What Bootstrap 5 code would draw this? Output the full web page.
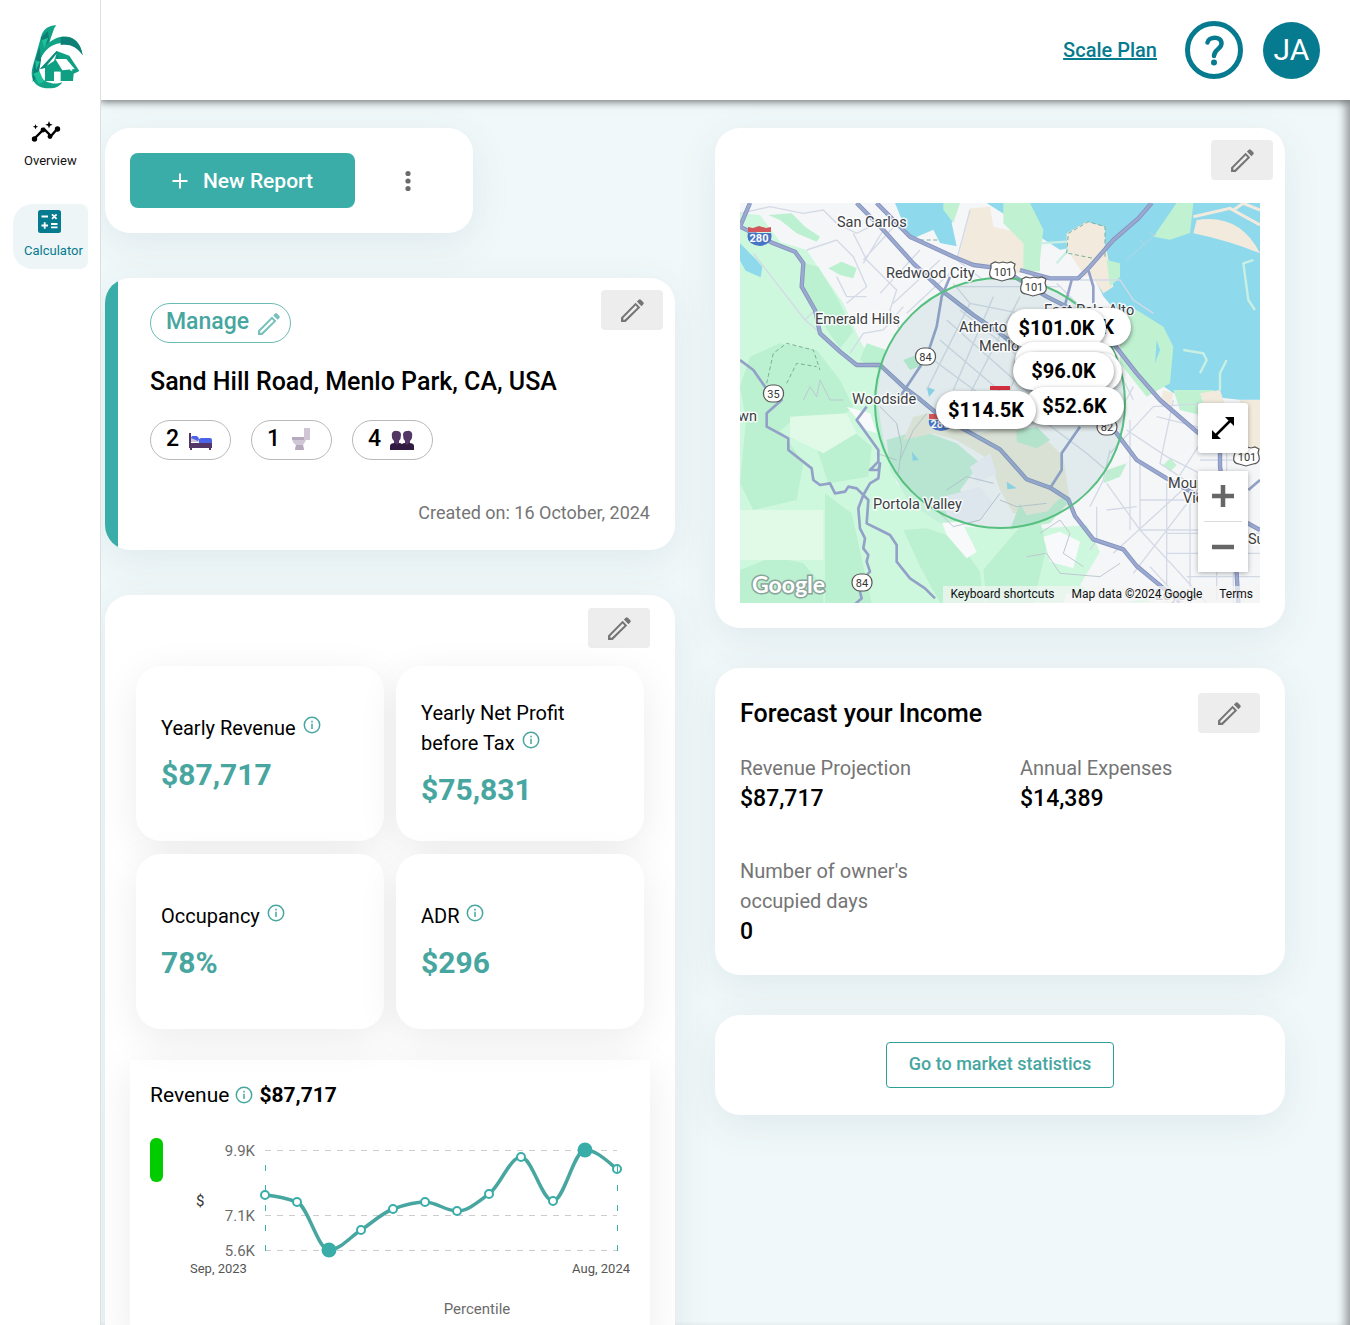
<!DOCTYPE html>
<html lang="en">
<head>
<meta charset="utf-8">
<meta name="viewport" content="width=device-width, initial-scale=1">
<title>Calculator</title>
<link href="https://cdn.jsdelivr.net/npm/bootstrap@5.3.0/dist/css/bootstrap.min.css" rel="stylesheet">
<style>
:root{--teal:#3aada8;--teal-text:#47a69f;--deep:#067a8f}
body{font-family:Roboto,"Liberation Sans",sans-serif;font-size:20px;line-height:30px;color:#000;background:#f0f8fa}
.side{width:101px;margin-right:-1px;border-right:1px solid #dcdfe0;padding-top:25px;z-index:4}
.side-logo{width:52px;height:64px;margin-left:31px}
.side-link{display:block;font-size:13px;line-height:18px;color:#111;text-decoration:none}
.side-link svg{display:block}
.side-over{padding:32px 0 0 24px}
.side-over svg{margin-bottom:9px}
.side-calc{margin:34px 12px 0 13px;padding:5px 0 9px 11px;border-radius:20px 8px 8px 20px;height:65px;background:#edf5f7;color:var(--deep)}
.side-calc svg{margin-bottom:7px}
.topbar{height:100px;padding-right:30px;gap:20px;box-shadow:0 2px 8px rgba(0,0,0,.5);z-index:3}
.plan-link{color:var(--deep);font-weight:500;margin-right:8px}
.round-btn{width:58px;height:58px;border-radius:50%;padding:0;border:0;background:none}
.avatar-btn{width:57px;height:57px;background:var(--deep);color:#fff;font-size:30px}
.content-pane{padding:28px 65px 0 5px;box-shadow:inset -10px 0 10px -6px rgba(0,0,0,.4);overflow-y:auto;scrollbar-width:none}
.content-pane::-webkit-scrollbar{display:none}
.cols{--bs-gutter-x:40px}
.panel{background:#fff;border-radius:25px;box-shadow:0 10px 40px rgba(60,80,80,.09)}
.new-panel{width:368px;max-width:100%;padding:25px;margin-bottom:45px}
.new-btn{width:225px;height:55px;border-radius:8px;background:var(--teal);color:#fff;font-size:21px;line-height:28px;font-weight:500;gap:15px}
.new-btn:hover{background:#329994;color:#fff}
.more-btn{margin-left:42px;padding:0;width:22px;line-height:20px}
.edit-btn{width:62px;height:40px;background:#ededed;border:0;border-radius:4px;padding:0;flex:none;display:flex;align-items:center;justify-content:center}
.place{background:linear-gradient(90deg,var(--teal) 13px,#fff 13px);padding:12px 12px 22px 45px;margin-bottom:45px}
.manage-btn{height:40px;margin-top:13px;padding:0 9px 3px 15px;border:1px solid #6bbab4;border-radius:20px;color:var(--teal-text);font-size:23px;font-weight:500;line-height:34px;gap:8px}
.manage-btn svg{margin-top:4px}
.place-name{font-size:25px;line-height:36px;font-weight:500;margin:21px 0 20px}
.chip{height:40px;border:1px solid #b9b9b9;border-radius:20px;font-size:23px;font-weight:500;padding:0 15px 2px;gap:8px;min-width:81px}
.made{color:#757575;font-size:18px;margin:38px 13px 0 0}
.stats{padding:13px 25px 200px}
.tiles{--bs-gutter-x:12px;--bs-gutter-y:13px;margin:5px 0 0}
.tile{height:175px;border-radius:25px;background:#fff;box-shadow:0 10px 40px rgba(0,0,0,.08);padding:0 25px}
.tile-val{color:var(--teal-text);font-size:30px;line-height:40px;font-weight:700;margin-top:12px}
.tile-name svg{margin-left:2px;vertical-align:1px}
.chart-box{margin-top:31px;padding:20px;box-shadow:0 10px 40px rgba(0,0,0,.08);background:#fff}
.chart-head{font-size:21px;gap:6px}
.chart-svg{display:block;width:100%;margin-top:15px}
.map-panel{padding:12px 12px 25px 25px;margin-bottom:40px}
.map-box{height:400px;margin:23px 13px 0 0;position:relative;overflow:hidden}
.pin{position:absolute;height:38px;border:0;border-radius:19px;background:#fff;color:#000;font-size:20px;line-height:38px;font-weight:700;padding:0;box-shadow:0 2px 5px rgba(0,0,0,.5)}
.pin-a{left:300px;top:105px;width:91px;text-align:right;padding-right:17px}
.pin-b{left:267px;top:106px;width:99px}
.pin-c{left:275px;top:139px;width:101px}
.pin-d{left:282px;top:150px;width:100px}
.pin-e{left:273px;top:149px;width:101px}
.pin-f{left:285px;top:184px;width:99px}
.pin-g{left:196px;top:188px;width:100px}
.map-tools{position:absolute;right:12px;top:200px;width:50px}
.map-tools button{display:flex;align-items:center;justify-content:center;width:50px;height:50px;border:0;background:#fff;padding:0}
.map-tools .tool-full{border-radius:3px;margin-bottom:18px;box-shadow:0 1px 5px rgba(0,0,0,.3)}
.zoom-set{background:#fff;box-shadow:0 1px 5px rgba(0,0,0,.3)}
.zoom-set hr{margin:0 6px;opacity:1;border-color:#dcdcdc}
.map-foot{position:absolute;right:0;bottom:0;height:17px;line-height:17px;font-size:12px;background:rgba(245,245,245,.7);padding:0 7px;gap:17px}
.map-foot a,.map-foot span{color:#111;text-decoration:none}
.income{padding:25px 25px 28px;margin-bottom:40px}
.income-title{font-size:25px;font-weight:500;line-height:42px;margin:0 0 -2px}
.facts{--bs-gutter-x:40px;--bs-gutter-y:42px;margin-top:-22px}
.facts dt{font-weight:400;color:#757575}
.facts dd{margin:0;padding-top:1px;font-size:23px;line-height:30px;font-weight:500}
.market{padding:27px}
.market-btn{height:46px;border:1px solid #2f9e98;border-radius:4px;color:var(--teal-text);font-size:18px;line-height:24px;font-weight:500;padding:0 22px 2px}
</style>
<script src="https://cdn.jsdelivr.net/npm/bootstrap@5.3.0/dist/js/bootstrap.bundle.min.js"></script>
</head>
<body>
<svg class="d-none">
<symbol id="pencil" viewBox="0 0 24 24"><path fill-rule="evenodd" d="M1 18.6 15 4.6l4.400 4.400-14 14H1zM3.200 20.800h1.300L16.700 9 15 7.300 3.200 19.200zM16.200 3.400l1.800-1.800q1-1 2 0l2.400 2.400q1 1 0 2l-1.800 1.800z"/></symbol>
<symbol id="info" viewBox="0 0 18 18"><circle cx="9" cy="9" r="7.700" fill="none" stroke="#47a69f" stroke-width="1.500"/><path d="M9 7.800v5.200M9 4.800v1.600" stroke="#47a69f" stroke-width="1.500"/></symbol>
</svg>
<div class="d-flex vh-100 overflow-hidden">
<nav class="side bg-white flex-shrink-0 position-relative" aria-label="Main">
  <svg class="side-logo d-block" viewBox="93 75 156 190" aria-label="Logo"><path fill="#12a387" d="M168 75C143 76 128 89 123 110L98 199C87 239 107 264 149 264c18 0 31-7 38-19-14 6-26 6-36 2-20-2-32-18-34-38-2-30 14-58 38-72 32-18 70-9 93 28-8-45-34-61-67-55-13 2-25 10-33 16l12-35q2-8 9-16z"/><path fill="#0d7f75" d="M102 190l17-50 4 40-8 45-17 20zM122 112l22-20 4 30-16 17zM182 111c34-6 59 10 66 53-18-25-38-34-66-30z"/><path fill="#1cc199" d="M125 120l20-8-12 32zM100 220l18-8 14 32-16 7zM106 180l14 4-12 26z"/><path fill="#0fa083" d="M170 152l-50 54 15-4v40h27v-28h20v28h37l2-22 17-8-30-46z"/><path fill="#0c8f7c" d="M170 152l-50 54 14-3 33-35 12 20z"/><path fill="#fff" d="M170 160l-30 36 22-14zM166 176l21 34 37-4-25-30zM164 214h16v28h-16zM196 190l17 22 5-2-16-20z"/></svg>
  <a class="side-link side-over" href="#"><svg width="44" height="22" viewBox="1 0 44 22"><path d="M12 17l9-9 7 7 7-8" fill="none" stroke="#000" stroke-width="2.400"/><circle cx="11.500" cy="18" r="2.700"/><circle cx="20" cy="9" r="2.400"/><circle cx="27" cy="15.500" r="2.400"/><circle cx="34.500" cy="8" r="2.700"/><path d="M26 0l1 2.700 2.700 1-2.700 1-1 2.700-1-2.700-2.700-1 2.700-1zM12.500 3l.7 2 2 .7-2 .7-.7 2-.7-2-2-.7 2-.7z"/></svg>Overview</a>
  <a class="side-link side-calc" href="#" aria-current="page"><svg width="50" height="26" viewBox="1 0 50 26"><rect x="15" y="1" width="23" height="23" rx="2.500" fill="#067a8f"/><path d="M18.500 7.500h6.500M18.500 16.500H25M21.700 13.300v6.400M28 15H34.500M28 18.300H34.500M29 5.300l4.600 4.600M33.600 5.300l-4.600 4.600" stroke="#fff" stroke-width="1.800"/></svg>Calculator</a>
</nav>
<div class="d-flex flex-column flex-grow-1 overflow-hidden">
<header class="topbar bg-white d-flex align-items-center justify-content-end flex-shrink-0 position-relative">
  <a class="plan-link" href="#">Scale Plan</a>
  <button class="round-btn" aria-label="Help"><svg class="d-block" width="58" height="58" viewBox="0 0 58 58" fill="none" stroke="#067a8f"><circle cx="29" cy="29" r="26.500" stroke-width="5"/><path d="M22.500 21.500c1-6 14-7 14 1 0 5.500-7.500 6-7.500 12.500" stroke-width="4.500" stroke-linecap="round"/><circle cx="29" cy="41.500" r="3" fill="#067a8f" stroke="none"/></svg></button>
  <button class="round-btn avatar-btn">JA</button>
</header>
<main class="content-pane flex-grow-1">
<div class="row cols">
<div class="col-6">
  <section class="panel new-panel d-flex align-items-center">
    <button class="btn new-btn d-flex align-items-center justify-content-center"><svg width="16" height="16" viewBox="0 0 16 16" stroke="#fff" stroke-width="2"><path d="M8 .5v15M.5 8h15"/></svg>New Report</button>
    <button class="btn more-btn border-0" aria-label="More"><svg width="22" height="22" viewBox="0 0 22 22" fill="#6b6b6b"><circle cx="11" cy="3.500" r="2.600"/><circle cx="11" cy="11" r="2.600"/><circle cx="11" cy="18.500" r="2.600"/></svg></button>
  </section>
  <section class="panel place">
    <div class="d-flex justify-content-between align-items-start">
      <button class="btn manage-btn d-flex align-items-center">Manage <svg width="24" height="24" fill="#79c2bc"><use href="#pencil"/></svg></button>
      <button class="edit-btn" aria-label="Edit address"><svg width="25" height="25" fill="#757575"><use href="#pencil"/></svg></button>
    </div>
    <h1 class="place-name">Sand Hill Road, Menlo Park, CA, USA</h1>
    <div class="d-flex" style="gap:20px">
      <span class="chip d-flex align-items-center">2 <svg width="26" height="24" viewBox="0 0 26 24"><path fill="#533566" d="M2 6h2v11h21v4h-1v2h-2v-2H5v2H3v-2H2z"/><path fill="#cdc4d6" d="M4 10h8v5H4z"/><path fill="#4a63e8" d="M5 9h5l2 3-1 2-7-3zM12 12l2-1h9q2 0 2 2v3H12z"/><path fill="#533566" d="M3 16h22v5H3z"/></svg></span>
      <span class="chip d-flex align-items-center">1 <svg width="26" height="24" viewBox="0 0 26 24"><path fill="#d0c7d6" d="M16 1h6v12h-4q-2 4-3 5l1 5H7l1-5q-4-2-4-8h12z"/><path fill="#b5abbd" d="M4 10h12v3H4zM8 18h7l1 5H7z"/></svg></span>
      <span class="chip d-flex align-items-center">4 <svg width="26" height="24" viewBox="0 0 26 24"><path fill="#533566" d="M3 6q2-3 5-2 4 0 4 4 0 4-2 6v4H5v-4q-3-3-2-8zM23 6q-2-3-5-2-4 0-4 4 0 4 2 6v4h5v-4q3-3 2-8z"/><path fill="#321b41" d="M1 23v-4q0-3 5-3l2 2 2-2q2 0 3 1 1-1 3-1l2 2 2-2q5 0 5 3v4z"/></svg></span>
    </div>
    <p class="made text-end">Created on: 16 October, 2024</p>
  </section>
  <section class="panel stats">
    <div class="d-flex justify-content-end"><button class="edit-btn" aria-label="Edit results"><svg width="25" height="25" fill="#757575"><use href="#pencil"/></svg></button></div>
    <div class="row tiles">
      <div class="col-6"><div class="tile d-flex flex-column justify-content-center"><div class="tile-name">Yearly Revenue <svg width="18" height="18"><use href="#info"/></svg></div><div class="tile-val">$87,717</div></div></div>
      <div class="col-6"><div class="tile d-flex flex-column justify-content-center"><div class="tile-name">Yearly Net Profit before Tax <svg width="18" height="18"><use href="#info"/></svg></div><div class="tile-val">$75,831</div></div></div>
      <div class="col-6"><div class="tile d-flex flex-column justify-content-center"><div class="tile-name">Occupancy <svg width="18" height="18"><use href="#info"/></svg></div><div class="tile-val">78%</div></div></div>
      <div class="col-6"><div class="tile d-flex flex-column justify-content-center"><div class="tile-name">ADR <svg width="18" height="18"><use href="#info"/></svg></div><div class="tile-val">$296</div></div></div>
    </div>
    <div class="chart-box">
      <div class="chart-head d-flex align-items-center"><span>Revenue</span><svg width="18" height="18"><use href="#info"/></svg><strong class="fw-bold">$87,717</strong></div>
      <svg class="chart-svg" viewBox="0 0 480 200" font-family="Roboto, sans-serif" font-size="15" fill="#6b6b6b">
        <rect x="0" y="13" width="13" height="44" rx="6" fill="#0c0"/>
        <g stroke="#ccc" stroke-dasharray="6 6"><path d="M115 25.500h352M115 90.500h352M115 125.500h352"/></g>
        <g stroke="#3aada8" stroke-dasharray="6 14"><path d="M115.500 126V26M467.500 126V26"/></g>
        <path fill="none" stroke="#47a69f" stroke-width="3.500" d="M115 70C126 71 136 73 147 77C158 81 168 125 179 125C190 125 200 112 211 105C222 98 232 88 243 84C254 80 264 77 275 77C286 77 296 86 307 86C318 86 328 77 339 69C350 61 360 32 371 32C382 32 392 76 403 76C414 76 424 25 435 25C446 25 456 35 467 44"/>
        <g fill="#fff" stroke="#3aada8" stroke-width="2"><circle cx="115" cy="70" r="4"/><circle cx="147" cy="77" r="4"/><circle cx="211" cy="105" r="4"/><circle cx="243" cy="84" r="4"/><circle cx="275" cy="77" r="4"/><circle cx="307" cy="86" r="4"/><circle cx="339" cy="69" r="4"/><circle cx="371" cy="32" r="4"/><circle cx="403" cy="76" r="4"/><circle cx="467" cy="44" r="4"/></g>
        <path d="M467.500 40v8" stroke="#3aada8"/>
        <circle cx="179" cy="125" r="7.500" fill="#3aada8"/><circle cx="435" cy="25" r="7.500" fill="#3aada8"/>
        <g text-anchor="end"><text x="105" y="31">9.9K</text><text x="105" y="96">7.1K</text><text x="105" y="131">5.6K</text></g>
        <text x="46" y="81" fill="#333">$</text>
        <g font-size="13"><text x="40" y="148" fill="#555">Sep, 2023</text><text x="480" y="148" text-anchor="end" fill="#555">Aug, 2024</text></g>
        <text x="327" y="189" text-anchor="middle">Percentile</text>
      </svg>
    </div>
  </section>
</div>
<div class="col-6">
  <section class="panel map-panel">
    <div class="d-flex justify-content-end"><button class="edit-btn" aria-label="Edit map"><svg width="25" height="25" fill="#757575"><use href="#pencil"/></svg></button></div>
    <div class="map-box">
      <svg class="d-block w-100 h-100" viewBox="0 0 520 400" preserveAspectRatio="xMidYMid slice" font-family="Roboto, sans-serif">
        <svg width="520" height="400" viewBox="0 9 1560 1200" preserveAspectRatio="none">
          <rect y="9" width="1560" height="1200" fill="#f5f6f8"/>
          <!-- hills and parks -->
          <path fill="#cef8de" d="M0 40l60 5 60 80 80 25 40 60 70 100 40 90 20 40 60 30-20 120 20 130 40 130 90 90 110 40 180 10 190-15 40 80-60 100 100 60 100-20 60 80 30 54H0z"/>
          <path fill="#bbf0d0" d="M85 45l70-5 40 40 45 30-10 15-60-25-50-40zM195 190l40 10 60 100 45 95-40 50-70-100-45-90zM265 205l40-20 45 20-10 30-40-10zM0 560l30-90 90-40 110 20 70 90 40 80-60 50-110-20-70 60-80-40zM20 640l110 60 60 90-20 110-130 30-40-80zM215 700l120-10 60 50-10 90-120 20zM255 880l80 60 60 269H255zM0 1110l100-40 90 20 60 70v49H0zM490 990l70-5 90 30 70 100 10 94H600l-60-110zM840 980l60-20 20 80-40 169H740l-10-100zM490 480l40-15 20 30-40 15zM380 430l60 20-20 60-60-30z"/>
          <path fill="#e1fae8" d="M150 650l170-10 30 60-100 60-100-50zM0 930h250v150H0z"/>
          <path fill="#f8f9fa" d="M600 950l60 5 50 100-30 20-60-70zM910 1010l50-15 60 30-20 80-70-20zM320 620l70 20 20 60-30-10zM980 1180l90-10 40 39h-140z"/>
          <path fill="#c5f0d9" d="M440 720l100-30 110 40 70 60-60 80 50 90-110 10-90-60-60-100z"/>
          <path fill="#ecebdd" d="M490 720l30-70 50-10 130 70 100-40 110 40 60 60 20 140-60 40-110-10-40-70-30-90-100-60-70-20z"/>
          <path fill="#c0eed3" d="M830 690l60-10 40 40-40 25-60-20zM1100 810l60-20-20 40-50 20zM840 910l-30 80 120-20 60-70-30-5-40 40-60 10z"/>
          <path fill="#f0f2f8" d="M610 890l110-30 40 50-60 60-80-20zM690 800l60-40 20 60-60 30z"/>
          <!-- bay and marsh -->
          <path fill="#8fd9ed" d="M465 9h190l-20 60 15 70-50-10-20-40-70 30zM740 9h820v590h-60l-200-20-30-20 20-120-30-60-120-30-50-60-30-60 20-50-60-40-60 10z"/>
          <path fill="#f3eade" d="M690 25l60-5 10 60 90 20 3 120-70-5-130-30zM980 100l60-35 55 15v130l-60 20-40-60-15-30zM1060 150l40 0 20 110-30 20-40-60zM1370 60q130-20 190 100-100-40-200-60z"/>
          <path fill="none" stroke="#f3eade" stroke-width="9" d="M1360 50l110-25 90 50M1480 30l30-20 50 20"/>
          <path fill="#c0f2d2" d="M610 9h50l-20 60-30-40zM790 9h80l40 80-10 90v35h-50V130l-60-60zM1240 110l70-101h50l-10 90-60 20zM1140 340l50-10 80 50 30 60-10 110-70 40-80-100zM1100 180l40 10 0 40-30 30z"/>
          <path fill="#8fd9ed" d="M0 130l50 50 17 20-5 32-45-20-17-30zM560 560l25 10-18 20zM516 755l20 25-18 2zM800 845l30 20-28 3zM1250 420l10 30-15 40z"/>
          <path fill="none" stroke="#c9f0e2" stroke-width="7" d="M900 130l80-5M950 190l35-40M1330 450l60 10 10 20-20 40M1460 480l-20 40v50M1540 180l-30 10 15 110 20 30"/>
          <path fill="none" stroke="#b5d8e4" stroke-width="3" d="M1160 180l90-80M1200 120l15 15M1230 95l15 15"/>
          <path fill="none" stroke="#7fae98" stroke-width="3" stroke-dasharray="12 8" d="M980 160l5-60 60-35 50 15v90M985 160l75 15M80 550l20-90 40-30 80 20 20 60M140 550l30-60 60 10M520 120h80"/>
          <path fill="#c0f2d2" d="M1300 570l120 0 20 40-40 40-80-20z"/>
          <path fill="#f3eade" d="M1380 580l60-10 20 60-60 10zM1500 600h60v160l-60-20zM1270 570l30 10-10 50-30-20z"/>
          <path fill="#c0f2d2" d="M1270 795l20-20 20 20-20 20z"/>
          <!-- local streets -->
          <g fill="none" stroke="#d3dae6" stroke-width="4">
            <path d="M40 160l155 200 60 50M195 360l30-30M0 40l90-20 100 20 60-10 40 40 60 30 60-30M200 150l90-30 50 50 40 90-60 50M340 100l40 80 90 90-20 60 30 60M380 290h-60l-30-60M430 90l-60 100M480 60l-110 120M540 150l-120 130M600 180l-140 130M650 200L500 340M690 30l-40 150 80 60M330 460l40-60 60-10 60-70"/>
            <path d="M640 250l50 60 300 60M640 260l320 0M690 310l-130 260M760 290l-120 280M840 290L680 600M900 350l-90 220M620 360l260 230M600 420l200 170M580 480l150 110M660 330l240 190M950 250l60 60M1020 240h120l40 60 60 40M1120 480l60 120M1180 560l-60 110"/>
            <path d="M920 670l120 90 70 60M1160 690l120 80 100 50M1110 760l130-140 160-10M1250 650l120 30 80 60M1300 600l-40 190 120 80M1400 700l-90 140M1170 660v330M1200 780v210l230 0M1280 850v360M1350 880v330M1430 900v300M1100 850l100 140 120 130 80 89M1200 900h180M1100 930l90-10M1180 1120l200-260M1120 1060l240-220M1280 1000h280M1280 1060h280M1340 1130h220M1230 1100l100 109M1480 1000v209M1380 640l80 100v140M1380 780h120M1050 920l40-80 20-90M1070 920v100l-20 30"/>
          </g>
          <g fill="none" stroke="#bfc9d2" stroke-width="3"><path d="M420 620l50 50 15 70-10 80M410 760l60 20M480 780l40-90 40-50M620 870l60-40 80 20M590 930l50 50 80-20 60-80M780 900l50 20 90-10M860 1070l60-10 40 60 120 10 60-40M900 1000l60-40 30 40-20 60 60 40M190 600l20-40 20 30 10-50 30 60 40 0"/></g>
          <!-- highways, dark edge under light fill -->
          <g fill="none" stroke="#8492bd" stroke-linejoin="round" stroke-width="13"><path d="M30 9L0 80l60 30 40 20 65 25 25 35-5 70 40 70 15 70 60 55 50 40h70l70 65 50 38 60 50 90 50 90 50 80 90 70 25 55 35 20 50 55 70 90 30 40 50 60 50 70 58M350 9l80 81 90 100 90 85 90 70 80 55 200 160 150 140 60 80 90 55 100 55 180 100M410 9l100 101 130 60 60 25 80 10 60 35 80 50 60 30 140 110 70 90 70 80 110 95 70 55v50l50 320 5 90M840 210l90 25h85l30-30 75-85 75-65 40-46"/></g>
          <g fill="none" stroke="#9ba9d0" stroke-linejoin="round" stroke-width="8"><path d="M30 9L0 80l60 30 40 20 65 25 25 35-5 70 40 70 15 70 60 55 50 40h70l70 65 50 38 60 50 90 50 90 50 80 90 70 25 55 35 20 50 55 70 90 30 40 50 60 50 70 58M350 9l80 81 90 100 90 85 90 70 80 55 200 160 150 140 60 80 90 55 100 55 180 100M410 9l100 101 130 60 60 25 80 10 60 35 80 50 60 30 140 110 70 90 70 80 110 95 70 55v50l50 320 5 90M840 210l90 25h85l30-30 75-85 75-65 40-46"/></g>
          <g fill="none" stroke="#93a1c9" stroke-linejoin="round" stroke-width="8"><path d="M0 480l40 30 35 50 50 40-45 40v40l65 35v35l70 55 5 35 20 15 30-5 15 30 30-5 10-15 25 5 35 35-5 70 40 20 30 15 20 30v50l40 50 45 30 30 30M630 230l-25 60-15 90-30 90-60 90-20 30M380 620l-30 40 65 90v35l-25 25 25 0 5-20-5 45-25 15-20 35-15 40 5 60 15 30-5 30 15 20-5 20 10 30-20 20-15 20 10 40-45 40v39M995 240l-20 75M1045 210l15 50v50M1020 680l-55 80v50l-35 55M1525 870l35-30"/></g>
        </svg>
        <circle cx="260" cy="200" r="125" fill="#5a9a98" fill-opacity=".13" stroke="#55c07f" stroke-width="2"/>
        <rect x="250" y="183" width="20" height="4" fill="#d32f3f"/>
        <g font-size="14.500" fill="#3c4043" stroke="#fff" stroke-width="3" paint-order="stroke" stroke-opacity=".85" stroke-linejoin="round">
          <text x="97" y="24">San Carlos</text><text x="146" y="75">Redwood City</text><text x="75" y="121">Emerald Hills</text><text x="219" y="129">Atherton</text><text x="239" y="148">Menlo Park</text><text x="304" y="112">East Palo Alto</text><text x="112" y="201">Woodside</text><text x="133" y="306">Portola Valley</text><text x="-2" y="218">wn</text><text x="428" y="285">Mountain</text><text x="443" y="300">View</text><text x="508" y="341">Sunnyvale</text><text x="415" y="397" fill="#777">Loyola</text>
        </g>
        <g fill="#fff" stroke="#555" stroke-width="1.200"><rect x="175.500" y="145" width="20" height="17" rx="8"/><rect x="23.500" y="182" width="20" height="17" rx="8"/><rect x="112" y="371" width="20" height="17" rx="8"/><rect x="357" y="216" width="20" height="16" rx="8"/><path id="us" d="M251 61l4-2 4 1 4-1 4 1 4-1 4 2-1 4q4 10-5 11l-7 2-7-2q-8-1-4-11z"/><use href="#us" x="31" y="15"/><use href="#us" x="244" y="185"/></g>
        <path fill="#4774c4" d="M8 30h23q3 11-11 13Q5 41 8 30zM189 217h23q3 9-11 11-14-2-12-11z"/><path fill="#d2575c" d="M8 29v-5l5 1 6-2 7 2 5-1v5zM189 216v-5h23v5z"/>
        <g font-size="11" fill="#333" text-anchor="middle"><text x="185.500" y="157.500">84</text><text x="33.500" y="194.500">35</text><text x="122" y="383.500">84</text><text x="367" y="228">82</text><text x="263" y="73">101</text><text x="294" y="88">101</text><text x="507" y="258">101</text><text x="19" y="39" fill="#fff" font-weight="700">280</text><text x="200" y="225" fill="#fff" font-weight="700">280</text></g>
        <text x="12" y="390" font-family="Lato, Roboto, sans-serif" font-size="23" fill="#fff" stroke="#8aa59a" stroke-width="3" paint-order="stroke" font-weight="700">Google</text>
      </svg>
      <button class="pin pin-a">K</button><button class="pin pin-b">$101.0K</button>
      <button class="pin pin-c" aria-label="Listing"></button><button class="pin pin-d" aria-label="Listing"></button>
      <button class="pin pin-e">$96.0K</button><button class="pin pin-f">$52.6K</button><button class="pin pin-g">$114.5K</button>
      <div class="map-foot d-flex"><a href="#">Keyboard shortcuts</a><span>Map data ©2024 Google</span><a href="#">Terms</a></div>
      <div class="map-tools">
        <button class="tool-full" aria-label="Full screen"><svg width="26" height="26" viewBox="0 0 26 26"><path d="M6 20L20 6" stroke="#000" stroke-width="2.500"/><path d="M15 2h9v9zM2 15v9h9z"/></svg></button>
        <div class="zoom-set"><button aria-label="Zoom in"><svg width="24" height="24" viewBox="0 0 24 24"><path d="M12 1v22M1 12h22" stroke="#666" stroke-width="4.500"/></svg></button><hr><button aria-label="Zoom out"><svg width="24" height="24" viewBox="0 0 24 24"><path d="M1 12h22" stroke="#666" stroke-width="4.500"/></svg></button></div>
      </div>
    </div>
  </section>
  <section class="panel income">
    <div class="d-flex justify-content-between align-items-start"><h2 class="income-title">Forecast your Income</h2><button class="edit-btn" aria-label="Edit forecast"><svg width="25" height="25" fill="#757575"><use href="#pencil"/></svg></button></div>
    <dl class="row facts mb-0">
      <div class="col-6"><dt>Revenue Projection</dt><dd>$87,717</dd></div>
      <div class="col-6"><dt>Annual Expenses</dt><dd>$14,389</dd></div>
      <div class="col-6"><dt>Number of owner's occupied days</dt><dd>0</dd></div>
    </dl>
  </section>
  <section class="panel market text-center d-flex justify-content-center"><button class="btn market-btn">Go to market statistics</button></section>
</div>
</div>
</main>
</div>
</div>
</body>
</html>
